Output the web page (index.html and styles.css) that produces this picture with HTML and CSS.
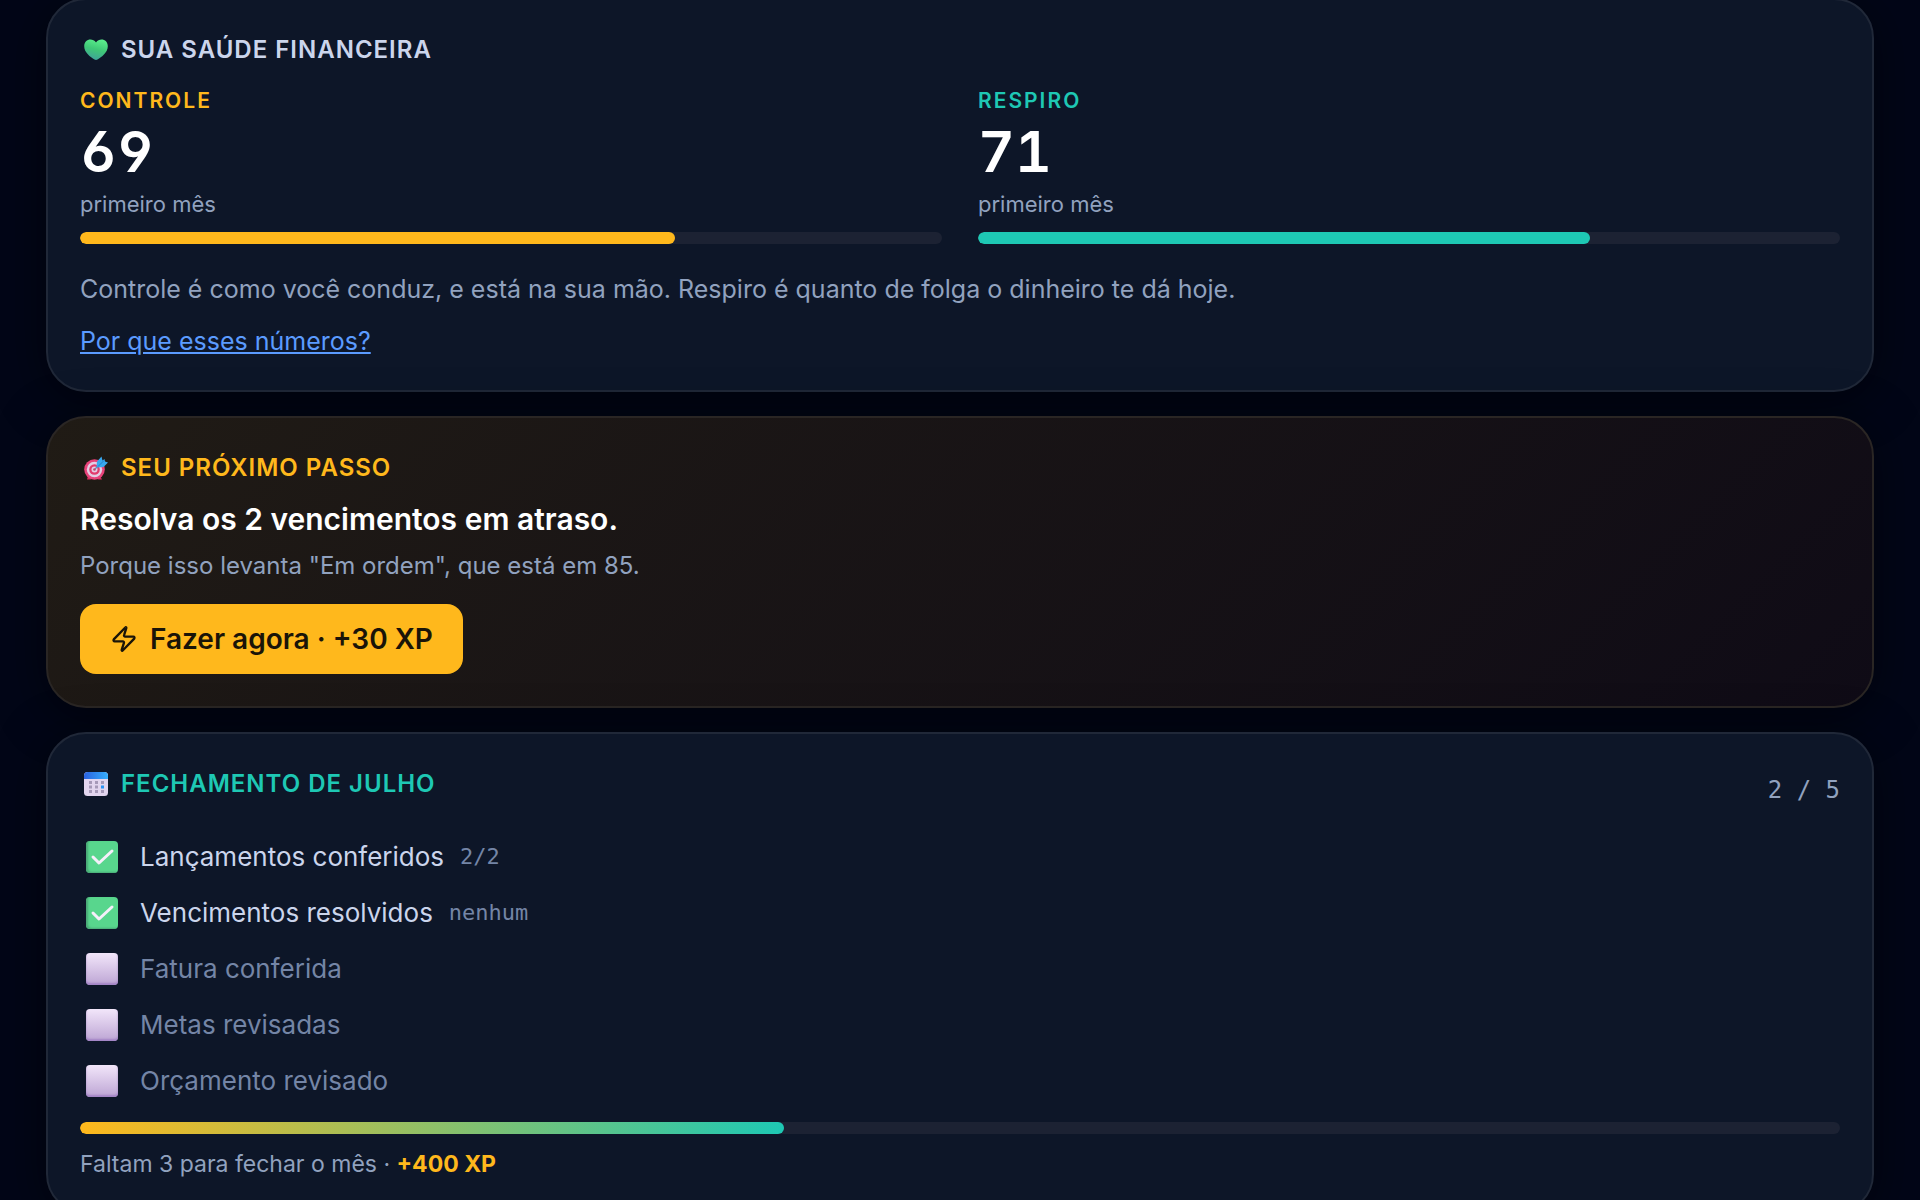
FILE: index.html
```html
<!DOCTYPE html>
<html lang="pt-BR">
<head>
  <meta charset="UTF-8">
  <meta name="viewport" content="width=device-width, initial-scale=1">
  <title>Saúde financeira</title>
  <link rel="stylesheet" href="styles.css">
</head>
<body>

<main class="cards">

  <section class="card">
    <h2 class="card-title">
      <svg class="emoji" viewBox="0 0 24 24" aria-hidden="true">
        <defs>
          <linearGradient id="heart" x1="0.7" y1="0" x2="0.4" y2="1">
            <stop offset="0" stop-color="#5bf08c"/>
            <stop offset="0.5" stop-color="#3fc877"/>
            <stop offset="1" stop-color="#3fa39a"/>
          </linearGradient>
        </defs>
        <path fill="url(#heart)" d="M12 4.500C10.500 2.200 8.500 1.500 6.500 1.500C3 1.500 0.200 4.200 0.200 8.200C0.200 14.500 6.500 19 10.500 21.500Q12 22.300 13.500 21.500C17.500 19 23.800 14.500 23.800 8.200C23.800 4.200 21 1.500 17.500 1.500C15.500 1.500 13.500 2.200 12 4.500Z"/>
      </svg>
      SUA SAÚDE FINANCEIRA
    </h2>
    <div class="scores">
      <div class="score">
        <h3 class="score-name yellow">CONTROLE</h3>
        <div class="score-value">69</div>
        <div class="score-note">primeiro mês</div>
        <div class="bar"><div class="fill fill-yellow" style="width: 69%"></div></div>
      </div>
      <div class="score">
        <h3 class="score-name teal">RESPIRO</h3>
        <div class="score-value">71</div>
        <div class="score-note">primeiro mês</div>
        <div class="bar"><div class="fill fill-teal" style="width: 71%"></div></div>
      </div>
    </div>
    <p class="explain">Controle é como você conduz, e está na sua mão. Respiro é quanto de folga o dinheiro te dá hoje.</p>
    <a class="why" href="#">Por que esses números?</a>
  </section>

  <section class="card card-next">
    <h2 class="card-title yellow">
      <svg class="emoji" viewBox="0 0 24 24" aria-hidden="true">
        <path fill="#d92e60" d="M4 20L3 23.500H7ZM16 20L18 23.500H14Z"/>
        <circle cx="10.500" cy="13.500" r="10.300" fill="#e8437a"/>
        <circle cx="10.500" cy="13.500" r="7.700" fill="#e3cde4"/>
        <circle cx="10.500" cy="13.500" r="5.300" fill="#e23b6d"/>
        <circle cx="10.500" cy="13.500" r="3" fill="#e3cde4"/>
        <circle cx="10.500" cy="13.500" r="1.300" fill="#b8456f"/>
        <path stroke="#6b86b0" stroke-width="1.300" d="M11 13L16 8"/>
        <path fill="#37a7ee" d="M12.500 11.500L13 5.500L17.500 0.500L18.500 4.500L20.500 3L21 5.500L24 6.500L19.500 11Z"/>
        <path stroke="#1c72c4" stroke-width="0.800" d="M14 10.500L20 4.500"/>
      </svg>
      SEU PRÓXIMO PASSO
    </h2>
    <p class="next-step">Resolva os 2 vencimentos em atraso.</p>
    <p class="next-why">Porque isso levanta "Em ordem", que está em 85.</p>
    <button class="do-now" type="button">
      <svg class="bolt" viewBox="0 0 24 24" aria-hidden="true">
        <path d="M4 14a1 1 0 0 1-.78-1.630l9.900-10.200a.5.5 0 0 1 .86.460l-1.920 6.020A1 1 0 0 0 13 10h7a1 1 0 0 1 .78 1.630l-9.900 10.200a.5.5 0 0 1-.86-.460l1.920-6.020A1 1 0 0 0 11 14z"/>
      </svg>
      Fazer agora · +30 XP
    </button>
  </section>

  <section class="card">
    <div class="card-head">
      <h2 class="card-title teal">
        <svg class="emoji" viewBox="0 0 24 24" aria-hidden="true">
          <defs>
            <linearGradient id="calTop">
              <stop offset="0" stop-color="#2b62e0"/>
              <stop offset="1" stop-color="#35aefc"/>
            </linearGradient>
          </defs>
          <rect width="24" height="24" rx="3.500" fill="#e2d5ee"/>
          <path fill="url(#calTop)" d="M0 7V4Q0 0 4 0H20Q24 0 24 4V7Z"/>
          <path fill="#a699b8" d="M5 9h3v3H5zM11 9h3v3h-3zM17 9h3v3h-3zM5 13.500h3v3H5zM11 13.500h3v3h-3zM5 18h3v3H5zM11 18h3v3h-3zM17 18h3v3h-3z"/>
          <path fill="#2b93f5" d="M17 13.500h3v3h-3z"/>
        </svg>
        FECHAMENTO DE JULHO
      </h2>
      <span class="count">2 / 5</span>
    </div>
    <ul class="tasks">
      <li>
        <label class="task done">
          <span class="tick"><input type="checkbox" checked><svg viewBox="0 0 32 32"><path d="M7 16L13 22L26 10"/></svg></span>
          Lançamentos conferidos
          <span class="task-note">2/2</span>
        </label>
      </li>
      <li>
        <label class="task done">
          <span class="tick"><input type="checkbox" checked><svg viewBox="0 0 32 32"><path d="M7 16L13 22L26 10"/></svg></span>
          Vencimentos resolvidos
          <span class="task-note">nenhum</span>
        </label>
      </li>
      <li>
        <label class="task">
          <span class="tick"><input type="checkbox"></span>
          Fatura conferida
        </label>
      </li>
      <li>
        <label class="task">
          <span class="tick"><input type="checkbox"></span>
          Metas revisadas
        </label>
      </li>
      <li>
        <label class="task">
          <span class="tick"><input type="checkbox"></span>
          Orçamento revisado
        </label>
      </li>
    </ul>
    <div class="bar"><div class="fill fill-mix" style="width: 40%"></div></div>
    <p class="left">Faltam 3 para fechar o mês · <strong class="yellow">+400 XP</strong></p>
  </section>

</main>

</body>
</html>
```

FILE: styles.css
```css
* {
  box-sizing: border-box;
}

body {
  margin: 0;
  background-color: #020617;
  color: #91a2bf;
  font-family: Inter, "Liberation Sans", sans-serif;
  font-size: 24px;
  line-height: 32px;
}

h2, h3, p, ul {
  margin: 0;
  padding: 0;
}

/* the first card sits slightly under the top edge */
.cards {
  display: flex;
  flex-direction: column;
  gap: 24px;
  margin: -2px 46px 0;
}

.card {
  padding: 32px;
  border: 2px solid #202838;
  border-radius: 40px;
  background-color: #0d1628;
  box-shadow: 0 8px 48px rgba(0, 0, 0, 0.5);
}

.card-next {
  border-color: #2a2624;
  background: linear-gradient(135deg, #201b15, #0f0b16);
}

.card-title {
  display: flex;
  align-items: center;
  gap: 13px;
  padding-left: 4px;
  color: #cbd5ec;
  font-size: 24px;
  font-weight: 600;
  line-height: 36px;
  letter-spacing: 1px;
}

.yellow,
.card-title.yellow {
  color: #ffb81c;
}

.teal,
.card-title.teal {
  color: #1ec8b4;
}

.emoji {
  width: 24px;
  height: 24px;
}

.scores {
  display: grid;
  grid-template-columns: 1fr 1fr;
  gap: 36px;
  margin-top: 17px;
}

.score-name {
  font-size: 21px;
  font-weight: 600;
  letter-spacing: 2px;
}

.score-value {
  margin-top: 5px;
  color: #fff;
  font-size: 57px;
  font-weight: 600;
  line-height: 60px;
  font-feature-settings: "tnum", "ss01", "cv03", "cv04";
}

.score-note {
  margin-top: 6px;
  font-size: 22px;
}

.bar {
  height: 12px;
  margin-top: 12px;
  border-radius: 6px;
  background-color: #1c2233;
  overflow: hidden;
}

.fill {
  height: 100%;
  border-radius: 6px;
}

.fill-yellow {
  background-color: #ffb81c;
}

.fill-teal {
  background-color: #1ec8b4;
}

.fill-mix {
  background: linear-gradient(90deg, #ffb81c, #1ec8b4);
}

.explain {
  margin-top: 29px;
  font-size: 25px;
}

.why {
  display: inline-block;
  margin-top: 20px;
  color: #5b9bff;
  font-size: 25px;
}

.next-step {
  margin-top: 17px;
  color: #fff;
  font-size: 30px;
  font-weight: 600;
}

.next-why {
  margin-top: 15px;
}

.do-now {
  display: flex;
  align-items: center;
  gap: 12px;
  height: 70px;
  margin-top: 22px;
  padding: 0 30px;
  border: none;
  border-radius: 16px;
  background-color: #ffb81c;
  color: #1a1408;
  font-family: inherit;
  font-size: 28px;
  font-weight: 600;
  cursor: pointer;
}

.bolt {
  width: 28px;
  height: 28px;
  fill: none;
  stroke: #1a1408;
  stroke-width: 2;
  stroke-linejoin: round;
}

.card-head {
  display: flex;
  justify-content: space-between;
  align-items: flex-start;
}

.count {
  padding-top: 8px;
  font-family: "DejaVu Sans Mono", monospace;
}

.tasks {
  margin-top: 23px;
  margin-bottom: 13px;
  list-style: none;
}

.tasks + .bar {
  margin-top: 0;
}

.task {
  display: flex;
  align-items: center;
  height: 56px;
  padding-left: 6px;
  color: #7485a6;
  font-size: 26px;
}

.task.done {
  color: #cbd5ec;
}

.tick {
  display: grid;
  margin-right: 22px;
}

.tick input,
.tick svg {
  grid-area: 1 / 1;
  width: 32px;
  height: 32px;
  margin: 0;
}

.tick input {
  appearance: none;
  border-radius: 4px;
  background: linear-gradient(#f2e6fa, #bda5d4);
  box-shadow: inset 0 -2px 2px #a384c6;
}

.tick input:checked {
  background: #58d68d;
  box-shadow: inset 2px -1px 2px #4aa876;
}

.tick svg {
  fill: none;
  stroke: #f5effa;
  stroke-width: 3;
  stroke-linecap: round;
  stroke-linejoin: round;
  pointer-events: none;
}

.task-note {
  margin-left: 16px;
  color: #7485a6;
  font-family: "DejaVu Sans Mono", monospace;
  font-size: 22px;
}

.left {
  margin-top: 14px;
  font-size: 23px;
}
```
